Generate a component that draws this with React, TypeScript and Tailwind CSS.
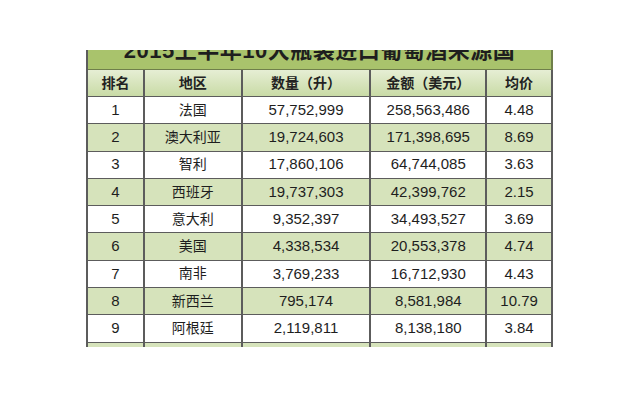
import React from "react";

const rows = [
    ["1", "法国", "57,752,999", "258,563,486", "4.48"],
    ["2", "澳大利亚", "19,724,603", "171,398,695", "8.69"],
    ["3", "智利", "17,860,106", "64,744,085", "3.63"],
    ["4", "西班牙", "19,737,303", "42,399,762", "2.15"],
    ["5", "意大利", "9,352,397", "34,493,527", "3.69"],
    ["6", "美国", "4,338,534", "20,553,378", "4.74"],
    ["7", "南非", "3,769,233", "16,712,930", "4.43"],
    ["8", "新西兰", "795,174", "8,581,984", "10.79"],
    ["9", "阿根廷", "2,119,811", "8,138,180", "3.84"],
    ["", "", "", "", ""],
];

const widths = ["w-[57px]", "w-[98px]", "w-[129px]", "w-[116px]", "w-[66px]"];
const headers = ["排名", "地区", "数量（升）", "金额（美元）", "均价"];

const App = () => {
    return (
        <div
            className="w-[640px] h-[400px] bg-white pt-[50px] pl-[86px]"
            style={{ fontFamily: '"Liberation Sans", "Noto Sans CJK SC", sans-serif' }}
        >
            <div className="w-[467px] h-[297px] overflow-hidden border-l-2 border-[#5c5c5c]">
                {/* title band, top of the text is cut off in the original */}
                <div className="h-[20px] overflow-hidden bg-[#a9c36c] border-r-2 border-b border-[#6f7f4a] flex justify-center">
                    <div className="text-[22px] leading-[24px] mt-[-11px] font-bold text-[#1e1e1e] tracking-[0.5px]">
                        2015上半年10大瓶装进口葡萄酒来源国
                    </div>
                </div>

                <div className="flex h-[27px] bg-gradient-to-b from-[#e6eed4] to-[#c9dba6] border-b border-[#5c5c5c]">
                    {headers.map((h, i) => (
                        <div
                            key={h}
                            className={`${widths[i]} flex items-center justify-center border-r-2 border-[#5c5c5c] text-[14px] font-bold text-[#222]`}
                        >
                            {h}
                        </div>
                    ))}
                </div>

                {rows.map((r, idx) => (
                    <div
                        key={idx}
                        className={`flex h-[27.3px] border-b border-[#5c5c5c] ${idx % 2 === 1 ? "bg-[#d6e3bb]" : "bg-white"}`}
                    >
                        {r.map((c, i) => (
                            <div
                                key={i}
                                className={`${widths[i]} flex items-center justify-center border-r-2 border-[#5c5c5c] text-[#1e1e1e] ${i === 1 ? "text-[14px]" : "text-[15px]"}`}
                            >
                                {c}
                            </div>
                        ))}
                    </div>
                ))}
            </div>
        </div>
    );
};

export default App;
